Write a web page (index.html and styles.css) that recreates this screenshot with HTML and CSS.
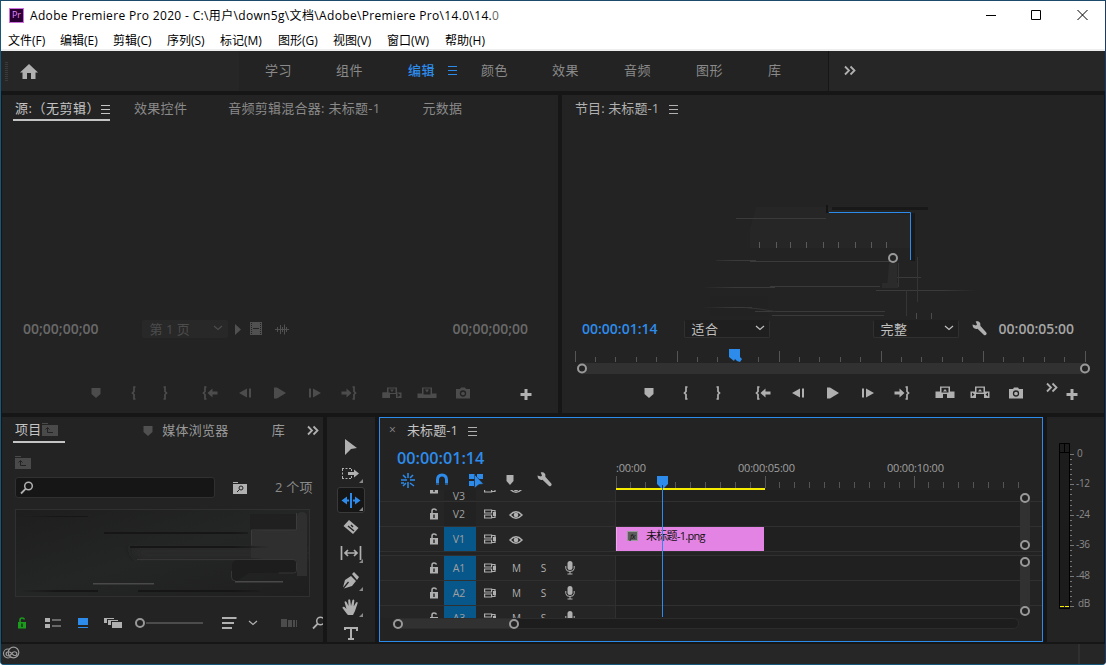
FILE: index.html
```
<!DOCTYPE html>
<html lang="zh-CN">
<head>
    <meta charset="UTF-8">
    <title>Adobe Premiere Pro 2020</title>
    <link rel="stylesheet" href="styles.css">
</head>
<body>
<svg class="sprite">
    <symbol id="menu" viewBox="0 0 10 10"><path d="M0 1.5h9M0 5.5h9M0 9.5h9" stroke="currentColor"/></symbol>
    <symbol id="more" viewBox="0 0 20 20"><path d="M5 5.5l4 4-4 4M10.5 5.5l4 4-4 4" fill="none" stroke="currentColor" stroke-width="1.8"/></symbol>
    <symbol id="chevron" viewBox="0 0 10 10"><path d="M1 3l4 3.5L9 3" fill="none" stroke="currentColor" stroke-width="1.2"/></symbol>
    <symbol id="marker" viewBox="0 0 20 20"><path d="M5.5 5h9v6L10 15l-4.5-4z" fill="currentColor"/></symbol>
    <symbol id="in" viewBox="0 0 20 20"><path d="M11.5 4H10v4.5L8.5 10l1.5 1.5V16h1.5" fill="none" stroke="currentColor" stroke-width="1.7"/></symbol>
    <symbol id="out" viewBox="0 0 20 20"><path d="M8.5 4H10v4.5l1.5 1.5-1.5 1.5V16H8.5" fill="none" stroke="currentColor" stroke-width="1.7"/></symbol>
    <symbol id="goin" viewBox="0 0 20 20"><path d="M6.5 4H5v4.5L3.5 10 5 11.5V16h1.5" fill="none" stroke="currentColor" stroke-width="1.7"/><path d="M7.5 10l5-4.500v3h5v3h-5v3z" fill="currentColor"/></symbol>
    <symbol id="goout" viewBox="0 0 20 20"><path d="M13.5 4H15v4.5l1.5 1.5-1.5 1.5V16h-1.5" fill="none" stroke="currentColor" stroke-width="1.7"/><path d="M12.5 10l-5-4.5v3h-5v3h5v3z" fill="currentColor"/></symbol>
    <symbol id="back" viewBox="0 0 20 20"><path d="M4 10l8-4.5v9zM14 5.5h2v9h-2z" fill="currentColor"/></symbol>
    <symbol id="fwd" viewBox="0 0 20 20"><path d="M16 10L8 5.5v9zM4 5.5h2v9H4z" fill="currentColor"/></symbol>
    <symbol id="play" viewBox="0 0 20 20"><path d="M4 4.5h3L16 10l-9 5.5H4z" fill="currentColor"/></symbol>
    <symbol id="insert" viewBox="0 0 20 20"><path d="M.5 9.5H5v-5h10v5h4.5V15H14v-4H6v4H.5zM6.5 5.5V10h7V5.5z" fill="currentColor" fill-rule="evenodd"/><path d="M8 6.5h4L10 9zM.5 9.5H8V15H.5z" fill="currentColor"/><path d="M15.5 9.7v4.6l3-2.3z" fill="#232323"/></symbol>
    <symbol id="overwrite" viewBox="0 0 20 20"><path d="M.5 10.5H5v-6h10v6h4.500V15H.5zM6.500 5.500v6h7v-6z" fill="currentColor" fill-rule="evenodd"/><path d="M8 6.500h4L10 9.500z" fill="currentColor"/></symbol>
    <symbol id="lift" viewBox="0 0 20 20"><path d="M.5 8.500H5v-5h10v5h4.500V15H12v-4H8v4H.5zM6.500 4.800V9.500h7V4.800z" fill="currentColor" fill-rule="evenodd"/><path d="M8 8.500h4L10 6z" fill="currentColor"/></symbol>
    <symbol id="extract" viewBox="0 0 20 20"><path d="M.5 8.500H5v-5h10v5h4.500V15H14v-4H6v4H.5zM6.500 4.800V9.500h7V4.800z" fill="currentColor" fill-rule="evenodd"/><path d="M8 8.500h4L10 6z" fill="currentColor"/><path d="M2 9.500v4L4.500 11.500zM18 9.500v4l-2.500-2z" fill="#232323"/></symbol>
    <symbol id="camera" viewBox="0 0 20 20"><path d="M3 6h4l1-1.5h4L13 6h4v9.5H3z" fill="currentColor"/><circle cx="10" cy="10.5" r="2.5" fill="none" stroke="#232323" stroke-width="1.3"/></symbol>
    <symbol id="plus" viewBox="0 0 20 20"><path d="M10 5v11M4.5 10.5h11" stroke="currentColor" stroke-width="3"/></symbol>
    <symbol id="wrench" viewBox="0 0 20 20"><path d="M3.5 5.5l3.5 1 1-1-1.300-3c3-.7 5.300 1 4.600 4.300l6 6.800c1.200 1.500-.8 3.600-2.300 2.300L8.500 9.700c-3 .8-5-1.200-5-4.200z" fill="currentColor"/></symbol>
    <symbol id="search" viewBox="0 0 14 14"><circle cx="8.500" cy="5" r="3.800" fill="none" stroke="currentColor" stroke-width="1.500"/><path d="M5.800 7.700L1 12.500" stroke="currentColor" stroke-width="1.800"/></symbol>
    <symbol id="folder" viewBox="0 0 16 13"><path d="M0 0h6v1H0zM0 2h16v11H0z" fill="currentColor"/><path d="M5.5 5v4.500H11M3.500 6.500l2-2 2 2" fill="none" stroke="#232323"/></symbol>
    <symbol id="lock" viewBox="0 0 10 12"><path d="M1 5h8v6.500H1z" fill="currentColor"/><path d="M3 5V3q0-2 2-2 2 0 2.500 1.500" fill="none" stroke="currentColor" stroke-width="1.5"/><path d="M4.300 6.500h1.400v3.500H4.300z" fill="#232323"/></symbol>
    <symbol id="sync" viewBox="0 0 12 10"><path d="M.6 1h7v3h-7zM.6 6h7v3h-7zM8 1.500h3v7H8" fill="none" stroke="currentColor" stroke-width="1.2"/><path d="M9 3h3v4H9z" fill="currentColor"/></symbol>
    <symbol id="eye" viewBox="0 0 14 10"><path d="M1 5q6-6.500 12 0-6 6.500-12 0z" fill="none" stroke="currentColor" stroke-width="1.5"/><circle cx="7" cy="5" r="2.3" fill="currentColor"/></symbol>
    <symbol id="mic" viewBox="0 0 10 14"><rect x="2.5" y="0" width="5" height="9" rx="2.5" fill="currentColor"/><path d="M.8 5v2.500q.2 3 4.200 3t4.200-3V5M5 10.500V13M2.500 13h5" fill="none" stroke="currentColor"/></symbol>
</svg>

<div class="window">
    <div class="titlebar">
        <div class="logo">Pr</div>
        <div class="title">Adobe Premiere Pro 2020 - C:\用户\down5g\文档\Adobe\Premiere Pro\14.0\14.<span>0</span></div>
        <svg class="controls" width="102" height="12"><path d="M0 6.500h10M45.500 1.500h9v9h-9zM91.500 1l10 10M101.500 1l-10 10" fill="none" stroke="#000"/></svg>
    </div>
    <div class="menubar">
        <span>文件(F)</span><span>编辑(E)</span><span>剪辑(C)</span><span>序列(S)</span><span>标记(M)</span><span>图形(G)</span><span>视图(V)</span><span>窗口(W)</span><span>帮助(H)</span>
    </div>

    <div class="workspaces">
        <div class="home">
            <div class="grip"></div>
            <svg width="18" height="16"><path d="M9 0l9 8.500h-2.500V15H11V9H7v6H2.500V8.500H0z" fill="#b0b0b0"/></svg>
        </div>
        <div class="wsTabs">
            <span>学习</span><span>组件</span><span class="on">编辑<svg class="burger"><use href="#menu"/></svg></span><span>颜色</span><span>效果</span><span>音频</span><span>图形</span><span>库</span>
        </div>
        <svg class="ico wsMore"><use href="#more"/></svg>
    </div>

    <div class="row upper">
        <div class="panel source">
            <div class="tabs">
                <span class="tab active">源:（无剪辑）<svg class="burger"><use href="#menu"/></svg></span>
                <span class="tab">效果控件</span>
                <span class="tab">音频剪辑混合器: 未标题-1</span>
                <span class="tab">元数据</span>
            </div>
            <div class="view"></div>
            <div class="info">
                <span class="timecode">00;00;00;00</span>
                <div class="select off"><span>第 1 页</span><svg><use href="#chevron"/></svg></div>
                <svg class="mediaIcons" width="56" height="16"><path d="M1 3l6 5.500L1 14zM16 1h12v13H16z" fill="#505050"/><path d="M17.500 2v11M26.500 2v11" stroke="#232323" stroke-dasharray="1 1"/><path d="M19 7.500h6" stroke="#232323"/><path d="M41 8.500h14M43.500 6v5M46.500 4v9M48.500 6v5M50.500 3.500v10M52.500 6v5" stroke="#505050"/></svg>
                <span class="timecode">00;00;00;00</span>
            </div>
            <div class="transport">
                <svg class="ico"><use href="#marker"/></svg><svg class="ico"><use href="#in"/></svg><svg class="ico"><use href="#out"/></svg><svg class="ico"><use href="#goin"/></svg><svg class="ico"><use href="#back"/></svg><svg class="ico"><use href="#play"/></svg><svg class="ico"><use href="#fwd"/></svg><svg class="ico"><use href="#goout"/></svg><svg class="ico"><use href="#insert"/></svg><svg class="ico"><use href="#overwrite"/></svg><svg class="ico"><use href="#camera"/></svg><svg class="ico add"><use href="#plus"/></svg>
            </div>
        </div>

        <div class="panel program">
            <div class="tabs">
                <span class="tab">节目: 未标题-1<svg class="burger"><use href="#menu"/></svg></span>
            </div>
            <div class="view">
                <svg width="300" height="125" viewBox="690 200 300 125">
                    <defs>
                        <linearGradient id="fade"><stop offset="0" stop-color="#3a3a3a" stop-opacity="0"/><stop offset=".12" stop-color="#3a3a3a"/><stop offset=".88" stop-color="#3a3a3a"/><stop offset="1" stop-color="#3a3a3a" stop-opacity="0"/></linearGradient>
                    </defs>
                    <path d="M756 207h70l84 8v33H750v-20z" fill="#262626"/>
                    <path d="M710 296h58v20h-58z" fill="#222"/>
                    <path d="M832 207h96v3h-96zM911 213h4v48h-4z" fill="#181818"/>
                    <path d="M827 205v8" stroke="#151515" stroke-width="2"/>
                    <path d="M829 212.500h81.500V260" fill="none" stroke="#2d8ceb"/>
                    <path d="M759.500 242v6M776.500 242v6M790.500 242v6M806.500 242v6M823.500 242v6M838.500 242v6M855.500 242v6M871.500 242v6M886.500 242v6" stroke="#5a5a5a"/>
                    <path d="M736 218h90v1h-90zM716 260h40v1h-40zM750 261h141v1H750zM705 287h70v1h-70zM770 286h110v1H770zM702 307h50v1h-50zM755 311h130v1H755zM772 315h112v1H772zM876 290h100v1H876zM893 277h28v1h-28z" fill="url(#fade)"/>
                    <path d="M745 307.500q15 1 30 4M917.500 257v45M898.500 263v24M906.500 290v26" stroke="#353535" fill="none"/>
                    <path d="M889 263h8v25h-10zM882 283h16v5h-16z" fill="#2b2b2b"/>
                    <path d="M916.500 313v6M931.500 313v6" stroke="#4c4c4c"/>
                    <circle cx="893" cy="258" r="4" fill="#232323" stroke="#999" stroke-width="2"/>
                </svg>
            </div>
            <div class="info">
                <span class="timecode blue">00:00:01:14</span>
                <div class="select"><span>适合</span><svg><use href="#chevron"/></svg></div>
                <div class="select"><span>完整</span><svg><use href="#chevron"/></svg></div>
                <svg class="ico"><use href="#wrench"/></svg>
                <span class="timecode light">00:00:05:00</span>
            </div>
            <svg class="ruler" width="520" height="34" viewBox="570 345 520 34">
                <path d="M575.500 351v11M677.500 351v11M779.500 351v11M881.500 351v11M983.500 351v11M1085.500 351v11M595.500 357v5M615.500 357v5M636.500 357v5M656.500 357v5M697.500 357v5M717.500 357v5M758.500 357v5M799.500 357v5M819.500 357v5M840.500 357v5M860.500 357v5M901.500 357v5M921.500 357v5M942.500 357v5M962.500 357v5M1003.500 357v5M1023.500 357v5M1044.500 357v5M1064.500 357v5" stroke="#555"/>
                <rect x="577" y="363" width="513" height="11" rx="5" fill="#313131"/>
                <circle cx="582" cy="368.500" r="4" fill="#232323" stroke="#999" stroke-width="2"/>
                <circle cx="1085" cy="368.500" r="4" fill="#232323" stroke="#999" stroke-width="2"/>
                <path d="M729 349h11v8l2 2-2 3-3-1-2-2-1 2-5-4z" fill="#2d8ceb"/>
            </svg>
            <div class="transport">
                <svg class="ico"><use href="#marker"/></svg><svg class="ico"><use href="#in"/></svg><svg class="ico"><use href="#out"/></svg><svg class="ico"><use href="#goin"/></svg><svg class="ico"><use href="#back"/></svg><svg class="ico"><use href="#play"/></svg><svg class="ico"><use href="#fwd"/></svg><svg class="ico"><use href="#goout"/></svg><svg class="ico"><use href="#lift"/></svg><svg class="ico"><use href="#extract"/></svg><svg class="ico"><use href="#camera"/></svg><svg class="ico up"><use href="#more"/></svg><svg class="ico add"><use href="#plus"/></svg>
            </div>
        </div>
    </div>

    <div class="row lower">
        <div class="panel project">
            <div class="tabs">
                <span class="tab active">项目<svg class="folder" width="16" height="13"><use href="#folder"/></svg></span>
                <svg class="ico"><use href="#marker"/></svg>
                <span class="tab">媒体浏览器</span>
                <span class="tab lib">库</span>
                <svg class="ico light"><use href="#more"/></svg>
            </div>
            <svg class="folder" width="16" height="13"><use href="#folder"/></svg>
            <div class="filter">
                <div class="search"><svg width="14" height="14"><use href="#search"/></svg></div>
                <svg width="14" height="12"><path d="M0 0h5v1H0zM0 2h14v10H0z" fill="#b0b0b0"/><circle cx="8" cy="6" r="2" fill="none" stroke="#232323"/><path d="M6.500 7.500L4 10" stroke="#232323"/></svg>
                <span>2 个项</span>
            </div>
            <div class="bin">
                <svg width="293" height="86" viewBox="16 510 293 86">
                    <defs>
                        <linearGradient id="binbg" y2="1"><stop offset="0" stop-color="#1e1e1e"/><stop offset=".5" stop-color="#242525"/><stop offset="1" stop-color="#1f1f1f"/></linearGradient>
                        <linearGradient id="dark"><stop offset="0" stop-color="#161616" stop-opacity="0"/><stop offset=".15" stop-color="#161616"/><stop offset=".85" stop-color="#161616"/><stop offset="1" stop-color="#161616" stop-opacity="0"/></linearGradient>
                        <filter id="blur"><feGaussianBlur stdDeviation="4"/></filter>
                    </defs>
                    <path d="M16 510h293v86H16z" fill="url(#binbg)"/>
                    <path d="M130 547h178v12H140z" fill="#2b2b2b" filter="url(#blur)"/>
                    <path d="M297 516q1-4 5-4 5 0 5 5v59h-10v-14l-46-4v-27l46-3z" fill="#2f2f2f"/>
                    <path d="M250 514h46v16h-46z" fill="#202020"/>
                    <path d="M296.500 513v16q0 1-1 1h-44v15" fill="none" stroke="#3b3b3b"/>
                    <path d="M104 532h144v2H104zM130 546h140v2H130zM20 590h78v2H20zM138 590h122v2H138zM22 516h66v1H22z" fill="url(#dark)"/>
                    <path d="M232 566q0-5 5-6h57q3 0 3 3v7q0 3-3 3h-45l-14 9q-3-1-3-5z" fill="#1d1d1d"/>
                    <path d="M137 559.500h156q3.500 0 3.500 3v8q0 2.500-3 2.500h-15M231.500 571v6q0 4 4 4" fill="none" stroke="#363636"/>
                    <path d="M93 583h61v1.500H93zM235 581h48v1.500h-48z" fill="#494949"/>
                </svg>
            </div>
            <div class="binFooter">
                <svg class="green" width="10" height="12"><use href="#lock"/></svg>
                <svg width="16" height="12"><path d="M0 1h5v4H0zM0 7h5v4H0zM7 2.500h9v1H7zM7 8.500h9v1H7z" fill="#b0b0b0"/></svg>
                <svg width="10" height="12"><path d="M0 1h10v7H0zM0 10h10v1H0z" fill="#2d8ceb"/></svg>
                <svg width="18" height="12"><path d="M8 5h10v6H8zM4 3h10v1H7v4H4zM0 1h10v1H3v4H0z" fill="#b0b0b0"/></svg>
                <svg width="69" height="12"><circle cx="6" cy="6" r="4" fill="none" stroke="#999" stroke-width="2"/><path d="M12 6h57" stroke="#4c4c4c" stroke-width="2"/></svg>
                <svg width="15" height="14"><path d="M0 2h14.500M0 7h12M0 12h10" stroke="#b0b0b0" stroke-width="2"/></svg>
                <svg width="10" height="10"><use href="#chevron"/></svg>
                <svg width="16" height="10"><path d="M0 1h6v8H0zM7 2h4v7H7zM12 2h2v7h-2zM15 2h1v7h-1z" fill="#4c4c4c"/></svg>
                <svg class="find" width="14" height="14"><use href="#search"/></svg>
            </div>
        </div>

        <div class="panel tools">
            <svg width="28" height="26"><path d="M8 4l12 9-6 1-6 6z" fill="#b0b0b0"/></svg>
            <svg width="28" height="26"><path d="M5 8.500h10M5 18.500h10M5.500 9v9M14.500 9v2M14.500 16v3" stroke="#b0b0b0" stroke-dasharray="2 1.500"/><path d="M11 12h6V9.500l5 4-5 4V15h-6z" fill="#b0b0b0"/><path d="M26 19v4h-4z" fill="#888"/></svg>
            <svg class="picked" width="28" height="26"><path d="M12 5h2v15h-2zM11 11.500H9v-3l-5.500 4L9 16.500v-3h2zM15 11.500h2v-3l5.500 4-5.500 4v-3h-2z" fill="#2d8ceb"/><path d="M25 19v4h-4z" fill="#888"/></svg>
            <svg width="28" height="26"><path d="M12 6l9.500 8-5.500 6L6.500 12z" fill="#b0b0b0"/><path d="M11 12l6 5M14 11l2 2" stroke="#232323" stroke-width="1.500"/></svg>
            <svg width="28" height="26"><path d="M4.500 6v14M23.500 6v14M8 13h12M11 10l-3 3 3 3M17 10l3 3-3 3" fill="none" stroke="#b0b0b0" stroke-width="1.700"/><path d="M26 19v4h-4z" fill="#888"/></svg>
            <svg width="28" height="26"><path d="M6 20.500l2-7.500 6-4 5 5-4 5-8 2.500 5-6-1-1zM15 7l2-2 5 5-2 3z" fill="#b0b0b0"/><path d="M26 20v4h-4z" fill="#888"/></svg>
            <svg width="28" height="26"><path d="M10 20L5.500 14q0-2 2-1l2 2-2-7q.7-1.500 2 0l2 4-.3-6q1-1.500 2 0l.8 6 1.500-6q1.200-1 1.800.5l-.6 6 2.300-4q1.500-1 1.700.6L18 17l-2 4h-5z" fill="#b0b0b0"/><path d="M26 19v4h-4z" fill="#888"/></svg>
            <svg width="28" height="20"><path d="M8 9V7h12v3M14 7v12M11 18h6" fill="none" stroke="#b0b0b0" stroke-width="2"/></svg>
        </div>

        <div class="panel timeline">
            <div class="tabs"><span class="close">×</span><span class="tab active">未标题-1</span><svg class="burger"><use href="#menu"/></svg></div>
            <div class="seqHead">
                <div class="seqTools">
                    <span class="timecode blue">00:00:01:14</span>
                    <div class="toggles">
                        <svg class="ico blue"><path d="M3 10h6M12 10h5M10 3v5M5 5l3 3M15 5l-3 3M10 12v6M5 16l3-3M12 13l4 3M3 13h3" stroke="currentColor" stroke-width="1.500"/></svg>
                        <svg class="ico blue"><path d="M5.500 15v-5q0-5 4.500-5t4.500 5v5" fill="none" stroke="currentColor" stroke-width="3"/><path d="M4 13h12v3H4z" fill="#232323" opacity=".5"/></svg>
                        <svg class="ico blue"><path d="M3 4h6v5H3zM11 4h6v5h-4l-2-1zM3 11h5v5H3z" fill="currentColor"/><path d="M8.500 4.500l9 9.500-4.500.5L8.500 18z" fill="currentColor" stroke="#232323" stroke-width=".5"/></svg>
                        <svg class="ico"><path d="M6.500 5h7v6L10 15l-3.500-4z" fill="currentColor"/></svg>
                        <svg class="ico"><use href="#wrench"/></svg>
                    </div>
                </div>
                <svg class="timeRuler" width="426" height="45" viewBox="616 445 426 45">
                    <g class="rulerText"><text x="616" y="472">:00:00</text><text x="738" y="472">00:00:05:00</text><text x="887" y="472">00:00:10:00</text></g>
                    <path d="M616.500 476v12M765.500 476v12M914.500 476v12M630.500 482v6M645.500 482v6M675.500 482v6M690.500 482v6M705.500 482v6M720.500 482v6M735.500 482v6M750.500 482v6M779.500 482v6M794.500 482v6M809.500 482v6M824.500 482v6M839.500 482v6M854.500 482v6M869.500 482v6M884.500 482v6M899.500 482v6M928.500 482v6M943.500 482v6M958.500 482v6M973.500 482v6M988.500 482v6M1003.500 482v6M1018.500 482v6" stroke="#555"/>
                    <path d="M616 488h149v2H616z" fill="#f5ec00"/>
                </svg>
            </div>
            <div class="tracks">
                <div class="track cut top"><div class="head"><svg class="lk"><use href="#lock"/></svg><b>V3</b><svg class="sy"><use href="#sync"/></svg><svg class="ey"><use href="#eye"/></svg></div><div class="lane"></div></div>
                <div class="track"><div class="head"><svg class="lk"><use href="#lock"/></svg><b>V2</b><svg class="sy"><use href="#sync"/></svg><svg class="ey"><use href="#eye"/></svg></div><div class="lane"></div></div>
                <div class="track"><div class="head"><svg class="lk"><use href="#lock"/></svg><b class="target">V1</b><svg class="sy"><use href="#sync"/></svg><svg class="ey"><use href="#eye"/></svg></div><div class="lane"><div class="clip"><i>fx</i>未标题-1.png</div></div></div>
                <div class="split"></div>
                <div class="track"><div class="head"><svg class="lk"><use href="#lock"/></svg><b class="target">A1</b><svg class="sy"><use href="#sync"/></svg><em>M</em><em>S</em><svg class="mc"><use href="#mic"/></svg></div><div class="lane"></div></div>
                <div class="track"><div class="head"><svg class="lk"><use href="#lock"/></svg><b class="target">A2</b><svg class="sy"><use href="#sync"/></svg><em>M</em><em>S</em><svg class="mc"><use href="#mic"/></svg></div><div class="lane"></div></div>
                <div class="track cut"><div class="head"><svg class="lk"><use href="#lock"/></svg><b class="target">A3</b><svg class="sy"><use href="#sync"/></svg><em>M</em><em>S</em><svg class="mc"><use href="#mic"/></svg></div><div class="lane"></div></div>
                <div class="vscroll video"><i></i><i></i></div>
                <div class="vscroll audio"><i></i><i></i></div>
            </div>
            <div class="hscroll"><div class="thumb"><i></i><i></i></div></div>
            <svg class="playhead" width="12" height="141"><path d="M0 0h11v8l-4 4H4L0 8z" fill="#2d8ceb"/><path d="M5.500 9v3" stroke="#10345a"/><path d="M5.500 12v129" stroke="#2d8ceb"/></svg>
        </div>

        <div class="panel meters">
            <svg width="57" height="180" viewBox="1047 436 57 180">
                <path d="M1059.500 443.500h10v165h-10zM1059.500 452.500h10M1064.500 444v9" fill="#1c1c1c" stroke="#000"/>
                <path d="M1060 606.500h4M1065 606.500h4" stroke="#f5ec00"/>
                <path d="M1070 454.500h4M1070 484.500h4M1070 515.500h4M1070 545.500h4M1070 576.500h4M1070 606.500h4M1070 459.500h2M1070 464.500h2M1070 469.500h2M1070 474.500h2M1070 479.500h2M1070 489.500h2M1070 494.500h2M1070 500.500h2M1070 505.500h2M1070 510.500h2M1070 520.500h2M1070 525.500h2M1070 530.500h2M1070 535.500h2M1070 540.500h2M1070 550.500h2M1070 555.500h2M1070 561.500h2M1070 566.500h2M1070 571.500h2M1070 581.500h2M1070 586.500h2M1070 591.500h2M1070 596.500h2M1070 601.500h2" stroke="#777"/>
                <g class="meterText"><text x="1077" y="457">0</text><text x="1076" y="487">-12</text><text x="1076" y="518">-24</text><text x="1076" y="548">-36</text><text x="1076" y="579">-48</text><text x="1078" y="607">dB</text></g>
            </svg>
        </div>
    </div>

    <div class="statusbar">
        <svg width="18" height="14"><circle cx="6" cy="7.500" r="4.500" fill="#262626" stroke="#999" stroke-width="1.200"/><circle cx="11.500" cy="6.500" r="5.300" fill="#262626" stroke="#999" stroke-width="1.200"/><path d="M12 9.500L8.500 6.500q-2-1.500-4 0-1 2 .5 3 2 1 4-1l1.500-2q2-1.500 4 0 1 2-.5 3h-2" fill="none" stroke="#999" stroke-width="1.200"/></svg>
        <div class="sep"></div>
    </div>
</div>
</body>
</html>
```
FILE: styles.css
```
* {
    box-sizing: border-box;
}
body {
    margin: 0;
    background: #fff;
    font-family: "Open Sans", "Noto Sans CJK SC", sans-serif;
    font-size: 12px;
    color: #8a8a8a;
    overflow: hidden;
}
svg {
    display: block;
    flex: none;
}
.sprite {
    position: absolute;
    width: 0;
    height: 0;
}
.window {
    width: 1106px;
    height: 665px;
    display: flex;
    flex-direction: column;
    background: #161616;
    border: 1px solid #17577a;
    border-top-color: #1b4a6b;
    border-right-color: #1c3a63;
    border-radius: 0 0 4px 4px;
    overflow: hidden;
}
.ico {
    width: 20px;
    height: 20px;
}
.burger {
    width: 10px;
    height: 10px;
}

/* title and menu */
.titlebar {
    height: 29px;
    display: flex;
    align-items: center;
    padding-left: 8px;
    background: #fff;
    color: #000;
}
.logo {
    width: 15px;
    height: 15px;
    border: 1px solid #d070e0;
    background: #2a0034;
    color: #e389f5;
    font-size: 9px;
    line-height: 12px;
    text-align: center;
}
.title {
    margin: -2px 0 0 6px;
    letter-spacing: 0.34px;
    white-space: nowrap;
}
.title span {
    color: #666;
}
.controls {
    margin: -1px 17px 0 auto;
}
.menubar {
    height: 21px;
    padding-left: 7px;
    display: grid;
    grid-template-columns: 52px 53px 54px 53px 58px 55px 54px 58px 60px;
    background: #fff;
    border-bottom: 2px solid #eee;
    color: #000;
    line-height: 21px;
}

/* workspace switcher */
.workspaces {
    height: 40px;
    display: flex;
    align-items: center;
    background: #262626;
    font-size: 13px;
}
.home {
    width: 238px;
    display: flex;
    align-items: center;
    padding: 1px 0 0 4px;
    gap: 12px;
}
.grip {
    width: 3px;
    height: 20px;
    background: repeating-linear-gradient(#3a3a3a 0 1px, transparent 1px 2px);
}
.wsTabs {
    width: 590px;
    height: 40px;
    padding-left: 26px;
    display: grid;
    grid-template-columns: 71px 72px 73px 71px 72px 72px 72px 30px;
    background: #232323;
    border-right: 1px solid #161616;
    line-height: 38px;
    letter-spacing: 0.6px;
}
.wsTabs .on {
    color: #2d8ceb;
    display: flex;
    height: 38px;
    align-items: center;
    gap: 13px;
    font-weight: 500;
}
.wsMore {
    margin-left: 11px;
    color: #b0b0b0;
}

/* panels */
.row {
    display: flex;
    gap: 4px;
    margin-top: 4px;
    padding-left: 1px;
}
.upper {
    height: 318px;
}
.lower {
    height: 225px;
}
.panel {
    background: #232323;
    display: flex;
    flex-direction: column;
    overflow: hidden;
}
.tabs {
    height: 26px;
    display: flex;
    align-items: center;
    flex: none;
    letter-spacing: 0.3px;
    font-size: 13px;
    line-height: 22px;
    white-space: nowrap;
}
.tab {
    display: flex;
    align-items: center;
}
.tab .burger {
    margin-top: 2px;
}
.active {
    color: #c4c4c4;
}
.timecode {
    font-size: 14px;
    font-weight: 600;
    line-height: 20px;
}
.blue {
    color: #2d8ceb;
}
.light {
    color: #a6a6a6;
}
.view {
    flex: 1;
}
.info {
    height: 22px;
    display: flex;
    align-items: center;
}
.transport {
    display: grid;
    height: 20px;
    margin-bottom: 10px;
}
.select {
    width: 86px;
    height: 18px;
    padding: 0 4px 2px 7px;
    display: flex;
    align-items: center;
    justify-content: space-between;
    border: 1px solid #303030;
    border-top-color: transparent;
    border-radius: 2px;
    background: #1f1f1f;
    color: #c0c0c0;
    font-size: 13px;
    letter-spacing: 0.5px;
}
.select.off {
    background: #282828;
    border-color: #282828;
    color: #4c4c4c;
    letter-spacing: 0;
}
.select svg {
    width: 10px;
    height: 10px;
}

/* source monitor */
.source {
    width: 556px;
}
.source .tab {
    margin-right: 24px;
}
.source .tab:nth-child(2) {
    margin-right: 41px;
}
.source .tab:nth-child(3) {
    margin-right: 42px;
    letter-spacing: 0.27px;
}
.source .active {
    width: 97px;
    height: 26px;
    margin-left: 11px;
    padding: 1px 0 0 2px;
    justify-content: space-between;
    border-bottom: 2px solid #c4c4c4;
    letter-spacing: 0.5px;
}
.source .active .burger {
    margin-right: -1px;
    margin-left: -8px;
}
.source .info {
    padding-left: 21px;
    color: #6a6a6a;
}
.source .select {
    margin-left: 43px;
}
.mediaIcons {
    margin: 0 163px 0 6px;
}
.source .transport {
    margin-top: 43px;
    padding-left: 84px;
    grid-template-columns: 38px 31px 45px 35px 35px 35px 34px 43px 35px 36px 63px 20px;
    color: #4c4c4c;
}
.transport .add {
    margin-top: 1px;
    color: #b0b0b0;
}

/* program monitor */
.program {
    width: 542px;
}
.program .tab {
    margin-left: 13px;
    gap: 10px;
    color: #b0b0b0;
    letter-spacing: 0.1px;
}
.program .view svg {
    margin: 79px 0 -7px 128px;
}
.program .info {
    padding-left: 20px;
    color: #b0b0b0;
}
.program .select {
    margin-left: 26px;
}
.program .select + .select {
    margin: 0 10px 0 103px;
}
.program .info .timecode.light {
    margin-left: 10px;
}
.ruler {
    margin: 5px 0 4px 8px;
}
.program .transport {
    padding-left: 77px;
    grid-template-columns: 37px 32px 45px 35px 35px 35px 34px 43px 35px 36px 36px 20px 20px;
    color: #b0b0b0;
}
.transport .up {
    margin-top: -5px;
}

/* project */
.project {
    width: 321px;
}
.project .tab.active {
    width: 53px;
    height: 26px;
    margin: 0 74px 0 11px;
    padding-left: 2px;
    border-bottom: 2px solid #c4c4c4;
}
.project .folder {
    color: #4a4a4a;
}
.project > .folder {
    margin: 13px 0 8px 13px;
}
.project .tabs {
    color: #999;
}
.project .tabs > .ico {
    width: 20px;
    margin: 2px 4px 0 -1px;
    color: #505050;
}
.project .tabs > .ico.light {
    margin: 1px 0 0 18px;
    color: #b0b0b0;
}
.tab.lib {
    margin-left: 43px;
}
.filter {
    height: 21px;
    margin-left: 13px;
    display: flex;
    align-items: center;
    font-size: 13px;
    line-height: 18px;
    white-space: nowrap;
}
.filter span {
    margin: -2px 0 0 28px;
    letter-spacing: 0.2px;
}
.search {
    width: 200px;
    height: 21px;
    margin-right: 18px;
    padding: 3px 4px;
    border: 1px solid #303030;
    border-radius: 3px;
    background: #161616;
    color: #b0b0b0;
}
.bin {
    width: 295px;
    height: 88px;
    margin: 11px 0 0 13px;
    border: 1px solid #303030;
}
.binFooter {
    height: 20px;
    margin: 16px 0 0 15px;
    display: grid;
    grid-template-columns: 28px 33px 26px 30px 88px 26px 33px 31px 14px;
    align-items: center;
    color: #b0b0b0;
}
.binFooter .green {
    color: #1c9c1c;
}

/* tools */
.tools {
    width: 48px;
    padding: 18px 0 0 0;
    align-items: center;
    gap: 1px;
}
.tools svg:nth-child(2) {
    margin-top: -2px;
}
.tools svg:nth-child(5) {
    margin-top: -1px;
}
.tools .picked {
    border: 1px solid #3a3a3a;
    border-radius: 3px;
    background: #161616;
}

/* timeline */
.timeline {
    position: relative;
    width: 664px;
    border: 1px solid #2d8ceb;
}
.timeline .tabs {
    height: 27px;
    padding: 0 0 4px 9px;
}
.close {
    width: 18px;
    font-size: 12px;
}
.timeline .tab {
    margin-right: 10px;
    letter-spacing: 0.1px;
}
.timeline .burger {
    margin-top: 2px;
    color: #b0b0b0;
}
.seqHead {
    display: flex;
    height: 45px;
}
.seqTools {
    width: 236px;
    padding: 3px 0 0 17px;
}
.seqTools .timecode {
    display: block;
    font-size: 16.2px;
    font-weight: 600;
}
.toggles {
    display: grid;
    grid-template-columns: 34px 34px 34px 34px 20px;
    margin: 2px 0 0 1px;
    color: #b0b0b0;
}
.rulerText {
    font-size: 11px;
    letter-spacing: -0.2px;
    fill: #a0a0a0;
}
.tracks {
    position: relative;
    height: 127px;
}
.track {
    display: flex;
    height: 25px;
    border-bottom: 1px solid #303030;
}
.track.cut {
    height: 12px;
    overflow: hidden;
    border-bottom: 0;
}
.track.top {
    border-bottom: 1px solid #303030;
    align-items: flex-end;
}
.head {
    width: 236px;
    height: 24px;
    flex: none;
    padding-left: 49px;
    display: flex;
    align-items: center;
    background: #252525;
    border-right: 1px solid #303030;
    color: #b0b0b0;
}
.head b {
    width: 32px;
    height: 24px;
    padding-right: 2px;
    background: #222;
    font-size: 10.5px;
    font-weight: 400;
    line-height: 24px;
    text-align: center;
    color: #a0a0a0;
}
.head .target {
    background: #08578a;
}
.top .head {
    height: 26px;
}
.top b {
    padding-top: 13px;
    line-height: 15px;
}
.lk {
    width: 10px;
    height: 12px;
    margin-right: 5px;
}
.sy {
    width: 12px;
    height: 10px;
    margin-left: 8px;
}
.ey {
    width: 14px;
    height: 10px;
    margin: 1px 0 0 13px;
}
.head em {
    width: 27px;
    margin-left: 7px;
    font-style: normal;
    font-size: 10px;
    text-align: center;
}
.head em + em {
    margin-left: 0;
}
.mc {
    width: 10px;
    height: 14px;
    margin-left: 8px;
}
.lane {
    width: 404px;
    height: 24px;
    background: #202020;
}
.clip {
    width: 148px;
    height: 24px;
    padding: 0 0 0 10px;
    display: flex;
    align-items: flex-start;
    background: #e383e3;
    border-left: 1px solid #f0a5f0;
    color: #111;
    font-size: 11px;
    letter-spacing: -0.7px;
    line-height: 17px;
}
.clip i {
    width: 11px;
    height: 10px;
    margin: 4px 8px 0 0;
    background: #5d5d5d;
    border: 1px solid #999;
    color: #111;
    font-size: 8px;
    line-height: 7px;
    text-align: center;
}
.split {
    height: 4px;
    background: #232323;
    border-bottom: 1px solid #303030;
}
.vscroll {
    position: absolute;
    left: 640px;
    width: 10px;
    display: flex;
    flex-direction: column;
    justify-content: space-between;
    background: #313131;
    border-radius: 5px;
}
.vscroll i, .hscroll i {
    width: 10px;
    height: 10px;
    border: 2px solid #999;
    border-radius: 50%;
    background: #232323;
}
.video {
    top: 3px;
    height: 57px;
}
.audio {
    top: 67px;
    height: 59px;
}
.hscroll {
    width: 627px;
    height: 11px;
    margin: 1px 0 0 12px;
    background: #1d1d1d;
    border: 1px solid #2c2c2c;
    border-radius: 6px;
}
.thumb {
    width: 126px;
    height: 9px;
    display: flex;
    align-items: center;
    justify-content: space-between;
    background: #313131;
    border-radius: 5px;
}
.playhead {
    position: absolute;
    left: 277px;
    top: 58px;
}

/* audio meters */
.meters {
    width: 57px;
    padding-top: 19px;
}
.meterText {
    font-size: 10px;
    letter-spacing: -0.3px;
    fill: #8a8a8a;
}

/* status bar */
.statusbar {
    height: 20px;
    margin-top: 2px;
    padding: 0 25px 0 1px;
    display: flex;
    justify-content: space-between;
    background: #262626;
}
.statusbar svg {
    margin-top: 2px;
}
.sep {
    width: 2px;
    background: #303030;
}
```
